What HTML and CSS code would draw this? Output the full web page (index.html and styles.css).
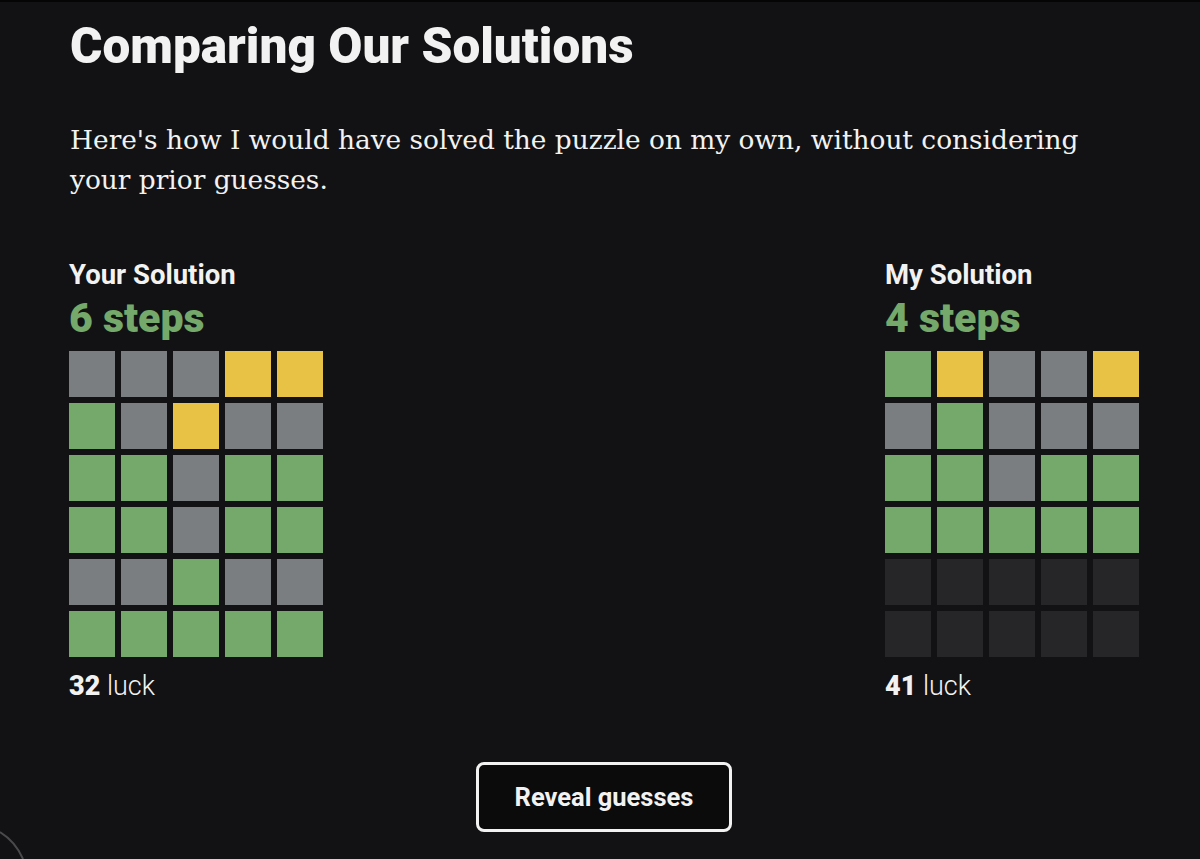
FILE: index.html
```html
<!DOCTYPE html>
<html lang="en">
<head>
    <meta charset="UTF-8">
    <meta name="viewport" content="width=device-width, initial-scale=1.0">
    <title>Comparing Our Solutions</title>
    <link rel="stylesheet" href="styles.css">
</head>
<body>
    <div id="container">
        <h1>Comparing Our Solutions</h1>
        <p class="intro">Here's how I would have solved the puzzle on my own, without considering your prior guesses.</p>

        <div class="solutions">
            <div class="solution">
                <h2>Your Solution</h2>
                <div class="steps">6 steps</div>
                <div class="board" data-rows="xxxyy gxyxx ggxgg ggxgg xxgxx ggggg"></div>
                <div class="luck"><b>32</b> luck</div>
            </div>
            <div class="solution">
                <h2>My Solution</h2>
                <div class="steps">4 steps</div>
                <div class="board" data-rows="gyxxy xgxxx ggxgg ggggg ----- -----"></div>
                <div class="luck"><b>41</b> luck</div>
            </div>
        </div>

        <div class="actions">
            <button>Reveal guesses</button>
        </div>
    </div>

    <!-- edge of the round help button in the corner -->
    <svg class="corner" width="30" height="30" viewBox="0 0 30 30">
        <path d="M0 3 A58 58 0 0 1 23 30" fill="none" stroke="#4a4a4d" stroke-width="2"/>
    </svg>

    <script>
        // g = green, y = yellow, x = grey, - = empty
        var tileClass = { g: 'correct', y: 'present', x: 'absent', '-': 'empty' };
        var boards = document.querySelectorAll('.board');
        for (var i = 0; i < boards.length; i++) {
            var letters = boards[i].getAttribute('data-rows').replace(/ /g, '');
            for (var j = 0; j < letters.length; j++) {
                var tile = document.createElement('div');
                tile.className = 'tile ' + tileClass[letters[j]];
                boards[i].appendChild(tile);
            }
        }
    </script>
</body>
</html>
```

FILE: styles.css
```css
body {
    margin: 0;
    padding: 0;
    background: #121214;
    border-top: 2px solid #050506;
    color: #f2f2f2;
    font-family: Roboto, 'Liberation Sans', Arial, sans-serif;
    height: 857px;
    overflow: hidden;
    position: relative;
}

#container {
    width: 1070px;
    margin-left: 69px;
}

h1 {
    font-size: 49.5px;
    font-weight: 900;
    margin: 14px 0 0 1px;
    line-height: 60px;
}

.intro {
    font-family: 'DejaVu Serif', Georgia, serif;
    font-size: 26.4px;
    line-height: 40px;
    margin: 44px 0 0 1px;
    max-width: 1030px;
}

.solutions {
    display: flex;
    justify-content: space-between;
    margin-top: 60px;
}

h2 {
    font-size: 27.5px;
    font-weight: 700;
    margin: 0;
    line-height: 30px;
}

.steps {
    color: #74a96b;
    font-size: 41px;
    font-weight: 900;
    line-height: 50px;
    margin-top: 3px;
    margin-bottom: 8px;
}

.board {
    display: grid;
    grid-template-columns: repeat(5, 46px);
    grid-auto-rows: 46px;
    gap: 6px;
}

.tile.correct {
    background: #74a96b;
}

.tile.present {
    background: #e8c244;
}

.tile.absent {
    background: #7b7e81;
}

.tile.empty {
    background: #262628;
}

.luck {
    font-size: 27px;
    font-weight: 300;
    margin-top: 13px;
}

.luck b {
    font-weight: 900;
}

.actions {
    display: flex;
    justify-content: center;
    margin-top: 60px;
}

button {
    background: #0b0b0c;
    color: #f2f2f2;
    border: 3px solid #f2f2f2;
    border-radius: 8px;
    width: 256px;
    height: 70px;
    font-family: Roboto, 'Liberation Sans', Arial, sans-serif;
    font-size: 25.5px;
    font-weight: 700;
    cursor: pointer;
}

.corner {
    position: absolute;
    left: 0;
    bottom: 0;
}
```
